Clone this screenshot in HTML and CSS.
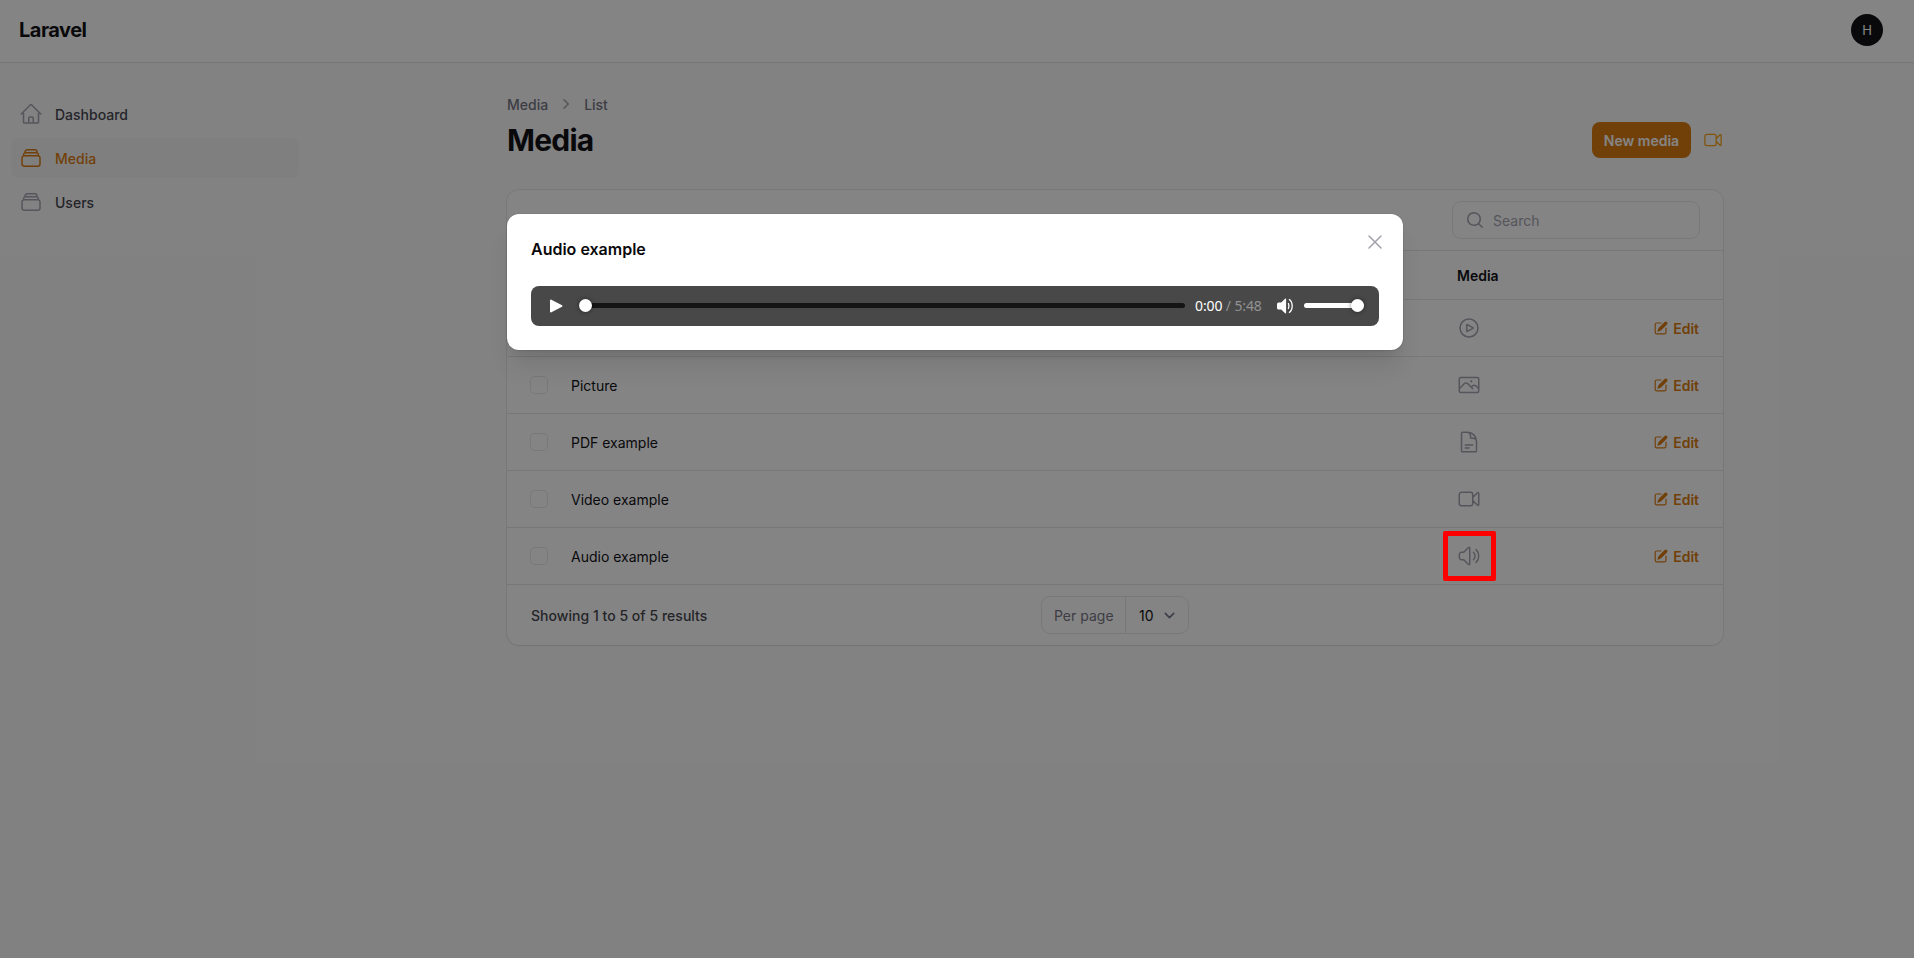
FILE: index.html
```html
<!DOCTYPE html>
<html lang="en">
<head>
<meta charset="utf-8">
<title>Media - Laravel</title>
<link rel="stylesheet" href="styles.css">
</head>
<body>
<svg class="sprite" aria-hidden="true">
  <symbol id="home" viewBox="0 0 24 24"><path d="m2.25 12 8.954-8.955c.44-.439 1.152-.439 1.591 0L21.75 12M4.5 9.75v10.125c0 .621.504 1.125 1.125 1.125H9.75v-4.875c0-.621.504-1.125 1.125-1.125h2.25c.621 0 1.125.504 1.125 1.125V21h4.125c.621 0 1.125-.504 1.125-1.125V9.75M8.25 21h8.25"/></symbol>
  <symbol id="stack" viewBox="0 0 24 24"><path d="M6 6.878V6a2.25 2.25 0 0 1 2.25-2.25h7.5A2.25 2.25 0 0 1 18 6v.878m-12 0c.235-.083.487-.128.75-.128h10.5c.263 0 .515.045.75.128m-12 0A2.25 2.25 0 0 0 4.5 9v.878m13.5-3A2.25 2.25 0 0 1 19.5 9v.878m0 0a2.246 2.246 0 0 0-.75-.128H5.25c-.263 0-.515.045-.75.128m15 0A2.25 2.25 0 0 1 21 12v6a2.25 2.25 0 0 1-2.25 2.25H5.25A2.25 2.25 0 0 1 3 18v-6c0-.98.626-1.813 1.5-2.122"/></symbol>
  <symbol id="play" viewBox="0 0 24 24"><path d="M21 12a9 9 0 1 1-18 0 9 9 0 0 1 18 0Z"/><path d="M15.91 11.672a.375.375 0 0 1 0 .656l-5.603 3.113a.375.375 0 0 1-.557-.328V8.887c0-.286.307-.466.557-.327l5.603 3.112Z"/></symbol>
  <symbol id="photo" viewBox="0 0 24 24"><path d="m2.25 15.75 5.159-5.159a2.25 2.25 0 0 1 3.182 0l5.159 5.159m-1.5-1.5 1.409-1.409a2.25 2.25 0 0 1 3.182 0l2.909 2.909m-18 3.75h16.5a1.5 1.5 0 0 0 1.5-1.5V6a1.5 1.5 0 0 0-1.5-1.5H3.75A1.5 1.5 0 0 0 2.25 6v12a1.5 1.5 0 0 0 1.5 1.5Zm10.5-11.25h.008v.008h-.008V8.25Zm.375 0a.375.375 0 1 1-.75 0 .375.375 0 0 1 .75 0Z"/></symbol>
  <symbol id="document" viewBox="0 0 24 24"><path d="M19.5 14.25v-2.625a3.375 3.375 0 0 0-3.375-3.375h-1.5A1.125 1.125 0 0 1 13.5 7.125v-1.5a3.375 3.375 0 0 0-3.375-3.375H8.25m0 12.75h7.5m-7.5 3H12M10.5 2.25H5.625c-.621 0-1.125.504-1.125 1.125v17.25c0 .621.504 1.125 1.125 1.125h12.75c.621 0 1.125-.504 1.125-1.125V11.25a9 9 0 0 0-9-9Z"/></symbol>
  <symbol id="video" viewBox="0 0 24 24"><path d="m15.75 10.5 4.72-4.72a.75.75 0 0 1 1.28.53v11.38a.75.75 0 0 1-1.28.53l-4.72-4.72M4.5 18.75h9a2.25 2.25 0 0 0 2.25-2.25v-9a2.25 2.25 0 0 0-2.25-2.25h-9A2.25 2.25 0 0 0 2.25 7.5v9a2.25 2.25 0 0 0 2.25 2.25Z"/></symbol>
  <symbol id="speaker" viewBox="0 0 24 24"><path d="M19.114 5.636a9 9 0 0 1 0 12.728M16.463 8.288a5.25 5.25 0 0 1 0 7.424M6.75 8.25l4.72-4.72a.75.75 0 0 1 1.28.53v15.88a.75.75 0 0 1-1.28.53l-4.72-4.72H4.51c-.88 0-1.704-.507-1.938-1.354A9.009 9.009 0 0 1 2.25 12c0-.83.112-1.633.322-2.396C2.806 8.756 3.63 8.25 4.51 8.25H6.75Z"/></symbol>
  <symbol id="pencil" viewBox="0 0 20 20"><path d="m5.433 13.917 1.262-3.155A4 4 0 0 1 7.58 9.42l6.92-6.918a2.121 2.121 0 0 1 3 3l-6.92 6.918c-.383.383-.84.685-1.343.886l-3.154 1.262a.5.5 0 0 1-.65-.65Z"/><path d="M3.5 5.75c0-.69.56-1.25 1.25-1.25H10A.75.75 0 0 0 10 3H4.75A2.75 2.75 0 0 0 2 5.750v9.5A2.75 2.75 0 0 0 4.750 18h9.5A2.75 2.75 0 0 0 17 15.250V10a.75.75 0 0 0-1.5 0v5.250c0 .69-.56 1.250-1.250 1.250h-9.5c-.69 0-1.250-.56-1.250-1.250v-9.5Z"/></symbol>
</svg>

<header class="topbar">
  <div class="logo">Laravel</div>
  <div class="avatar">H</div>
</header>

<div class="layout">
  <nav class="sidebar">
    <a class="nav-item"><svg class="icon"><use href="#home"/></svg><span class="label">Dashboard</span></a>
    <a class="nav-item active"><svg class="icon"><use href="#stack"/></svg><span class="label">Media</span></a>
    <a class="nav-item"><svg class="icon"><use href="#stack"/></svg><span class="label">Users</span></a>
  </nav>

  <main class="main">
    <div class="breadcrumbs">
      <span class="label">Media</span>
      <svg class="crumb-chevron" viewBox="0 0 20 20"><path d="m8 5.8 4.2 4.2L8 14.2"/></svg>
      <span class="label">List</span>
    </div>
    <div class="heading">
      <h1>Media</h1>
      <div class="actions">
        <button class="btn">New media</button>
        <svg class="icon action-icon"><use href="#video"/></svg>
      </div>
    </div>

    <section class="card">
      <div class="toolbar">
        <div class="search">
          <svg class="search-icon" viewBox="0 0 20 20"><path d="M9 3.5a5.5 5.5 0 1 0 0 11 5.5 5.5 0 0 0 0-11ZM2 9a7 7 0 1 1 12.452 4.391l3.328 3.329a.75.75 0 1 1-1.06 1.06l-3.329-3.328A7 7 0 0 1 2 9Z"/></svg>
          <span class="label">Search</span>
        </div>
      </div>
      <div class="row head"><span></span><span></span><b class="label">Media</b><span></span></div>
      <div class="row"><i class="check"></i><span></span><svg class="icon"><use href="#play"/></svg><a class="edit"><svg class="solid"><use href="#pencil"/></svg><span class="label">Edit</span></a></div>
      <div class="row"><i class="check"></i><span class="label">Picture</span><svg class="icon"><use href="#photo"/></svg><a class="edit"><svg class="solid"><use href="#pencil"/></svg><span class="label">Edit</span></a></div>
      <div class="row"><i class="check"></i><span class="label">PDF example</span><svg class="icon"><use href="#document"/></svg><a class="edit"><svg class="solid"><use href="#pencil"/></svg><span class="label">Edit</span></a></div>
      <div class="row"><i class="check"></i><span class="label">Video example</span><svg class="icon"><use href="#video"/></svg><a class="edit"><svg class="solid"><use href="#pencil"/></svg><span class="label">Edit</span></a></div>
      <div class="row"><i class="check"></i><span class="label">Audio example</span><svg class="icon"><use href="#speaker"/></svg><a class="edit"><svg class="solid"><use href="#pencil"/></svg><span class="label">Edit</span></a></div>
      <div class="footer">
        <span class="label results">Showing 1 to 5 of 5 results</span>
        <div class="per-page">
          <span class="per-label"><span class="label">Per page</span></span>
          <span class="per-value"><span class="label">10</span><svg class="per-chevron" viewBox="0 0 20 20"><path d="m6 8 4 4 4-4"/></svg></span>
        </div>
      </div>
    </section>
  </main>
</div>

<div class="overlay"></div>
<div class="highlight"></div>

<div class="modal">
  <svg class="close" viewBox="0 0 24 24"><path d="M6 18 18 6M6 6l12 12"/></svg>
  <h2>Audio example</h2>
  <div class="player">
    <svg class="player-play" viewBox="0 0 14 14"><path d="M0 .8Q0 0 1 0L13 6.2q1 .8 0 1.6L1 14Q0 14 0 13.2Z"/></svg>
    <div class="track"><i class="thumb"></i></div>
    <div class="time">0:00 <span>/ 5:48</span></div>
    <svg class="volume-icon" viewBox="0 0 16 16"><path class="fill" d="M9.1.9v14.2c0 .6-.6.6-1 .2L4.2 11.6H1.7C.6 11.6 0 10.7 0 9.800V6.300C0 5.300.6 4.400 1.700 4.400h2.500L8.100.7c.4-.4 1-.4 1 .2Z"/><path d="M11.300 4.900q1.400 3.100 0 6.200M12 1.300q3.200 2.200 3.200 6.700T12 14.700"/></svg>
    <div class="volume"><i class="thumb"></i></div>
  </div>
</div>
</body>
</html>
```
FILE: styles.css
```css
* { box-sizing: border-box; }

body {
  margin: 0;
  height: 958px;
  overflow: hidden;
  position: relative;
  background: #fafafa;
  color: #09090b;
  font: 14px/20px Inter, "Liberation Sans", sans-serif;
}

h1, h2 { margin: 0; }
.sprite { display: none; }

.label { display: block; padding-top: 2px; line-height: 18px; }

.icon {
  display: block;
  width: 24px;
  height: 24px;
  fill: none;
  stroke: #a1a1aa;
  stroke-width: 1.5;
  stroke-linecap: round;
  stroke-linejoin: round;
}

.topbar {
  display: flex;
  align-items: center;
  justify-content: space-between;
  height: 62px;
  padding: 0 31px 2px 19px;
  background: #fff;
  box-shadow: 0 0 0 1px rgba(9, 9, 11, .05), 0 1px 2px rgba(0, 0, 0, .05);
}
.logo { font-size: 20px; font-weight: 700; letter-spacing: -.5px; }
.avatar {
  width: 32px;
  height: 32px;
  border-radius: 50%;
  background: #09090b;
  color: #fff;
  font-size: 13px;
  line-height: 32px;
  text-align: center;
}

.layout { display: grid; grid-template-columns: 299px 1216px; column-gap: 208px; }

.sidebar { display: flex; flex-direction: column; gap: 4px; padding: 32px 0 0 11px; }
.nav-item {
  display: flex;
  align-items: center;
  gap: 12px;
  height: 40px;
  padding: 0 8px;
  border-radius: 8px;
  color: #3f3f46;
  font-weight: 500;
}
.nav-item.active { background: #f4f4f5; color: #d97706; }
.nav-item.active .icon { stroke: #d97706; }

.main { padding-top: 32px; }
.breadcrumbs { display: flex; align-items: center; gap: 8px; color: #71717a; font-weight: 500; }
.crumb-chevron { width: 20px; height: 20px; fill: none; stroke: #a1a1aa; stroke-width: 1.5; stroke-linecap: round; }
.heading { display: flex; align-items: center; justify-content: space-between; margin: 8px 0 32px; }
h1 { font-size: 30px; line-height: 36px; letter-spacing: -.75px; font-weight: 700; }
.actions { display: flex; align-items: center; gap: 12px; }
.btn {
  width: 99px;
  height: 36px;
  padding: 2px 0 0;
  border: 0;
  border-radius: 8px;
  background: #d97706;
  color: #fff;
  font: 600 14px/20px Inter, sans-serif;
  white-space: nowrap;
}
.action-icon { width: 20px; height: 20px; stroke: #f59e0b; }

.card {
  border-radius: 12px;
  background: #fff;
  box-shadow: 0 0 0 1px rgba(9, 9, 11, .07), 0 1px 2px rgba(0, 0, 0, .05);
}
.toolbar { display: flex; justify-content: flex-end; padding: 12px 24px; border-bottom: 1px solid #e4e4e7; }
.search {
  display: flex;
  align-items: center;
  gap: 8px;
  width: 246px;
  height: 36px;
  padding: 0 12px;
  border-radius: 8px;
  box-shadow: 0 0 0 1px rgba(9, 9, 11, .1);
  color: #a1a1aa;
}
.search-icon { width: 20px; height: 20px; fill: #a1a1aa; }

.row {
  display: grid;
  grid-template-columns: 40px 886px 100px 1fr;
  align-items: center;
  height: 57px;
  padding: 0 24px;
  border-bottom: 1px solid #e4e4e7;
}
.row.head { height: 49px; }
.row b { font-weight: 600; }
.check { width: 16px; height: 16px; border-radius: 4px; box-shadow: 0 0 0 1px rgba(9, 9, 11, .1); }
.edit { display: flex; align-items: center; justify-content: flex-end; gap: 4px; color: #d97706; font-weight: 600; }
.solid { width: 16px; height: 16px; fill: currentColor; }

.footer { display: grid; grid-template-columns: 1fr auto 1fr; align-items: center; height: 60px; padding: 0 24px; }
.results { color: #3f3f46; font-weight: 500; letter-spacing: .03px; }
.per-page {
  display: flex;
  align-items: center;
  width: 146px;
  height: 36px;
  border-radius: 8px;
  box-shadow: 0 0 0 1px rgba(9, 9, 11, .1);
}
.per-label {
  display: flex;
  align-items: center;
  width: 84px;
  height: 36px;
  padding-left: 12px;
  border-right: 1px solid #e4e4e7;
  color: #71717a;
}
.per-value { display: flex; align-items: center; gap: 5px; padding-left: 13px; }
.per-chevron { width: 21px; height: 21px; fill: none; stroke: #6b7280; stroke-width: 1.5; stroke-linecap: round; stroke-linejoin: round; }

.overlay { position: absolute; inset: 0; background: rgba(9, 9, 11, .5); }
.highlight {
  position: absolute;
  left: 1443px;
  top: 531px;
  width: 53px;
  height: 50px;
  border: 5px solid #f00;
  border-radius: 2px;
}

.modal {
  position: absolute;
  left: 507px;
  top: 214px;
  width: 896px;
  height: 136px;
  padding: 24px;
  border-radius: 12px;
  background: #fff;
  box-shadow: 0 0 0 1px rgba(9, 9, 11, .05), 0 20px 25px -5px rgba(0, 0, 0, .1), 0 8px 10px -6px rgba(0, 0, 0, .1);
}
.close { position: absolute; right: 16px; top: 16px; width: 24px; height: 24px; fill: none; stroke: #a1a1aa; stroke-width: 1.5; stroke-linecap: round; }
h2 { height: 48px; font-size: 16px; line-height: 22px; font-weight: 600; }

.player {
  display: flex;
  align-items: center;
  height: 40px;
  padding: 0 15px 0 19px;
  border-radius: 8px;
  background: #484848;
}
.player > * { flex: none; }
.player-play { width: 13px; height: 14px; fill: #fff; }
.track { display: flex; align-items: center; width: 606px; height: 5px; margin: 0 10px 1px 16px; border-radius: 3px; background: #141414; }
.thumb { flex: none; width: 13px; height: 13px; border-radius: 50%; background: #fff; box-shadow: 0 0 4px rgba(0, 0, 0, .5); }
.time { width: 82px; color: #fff; font: 14px/20px "Noto Sans", sans-serif; letter-spacing: -.12px; white-space: nowrap; }
.time span { color: #929292; }
.volume-icon { width: 16px; height: 16px; fill: none; stroke: #fff; stroke-width: 1.3; }
.volume-icon .fill { fill: #fff; stroke: none; }
.volume { display: flex; align-items: center; justify-content: flex-end; width: 60px; height: 5px; margin: 0 0 1px 11px; border-radius: 3px; background: #fff; }
```
